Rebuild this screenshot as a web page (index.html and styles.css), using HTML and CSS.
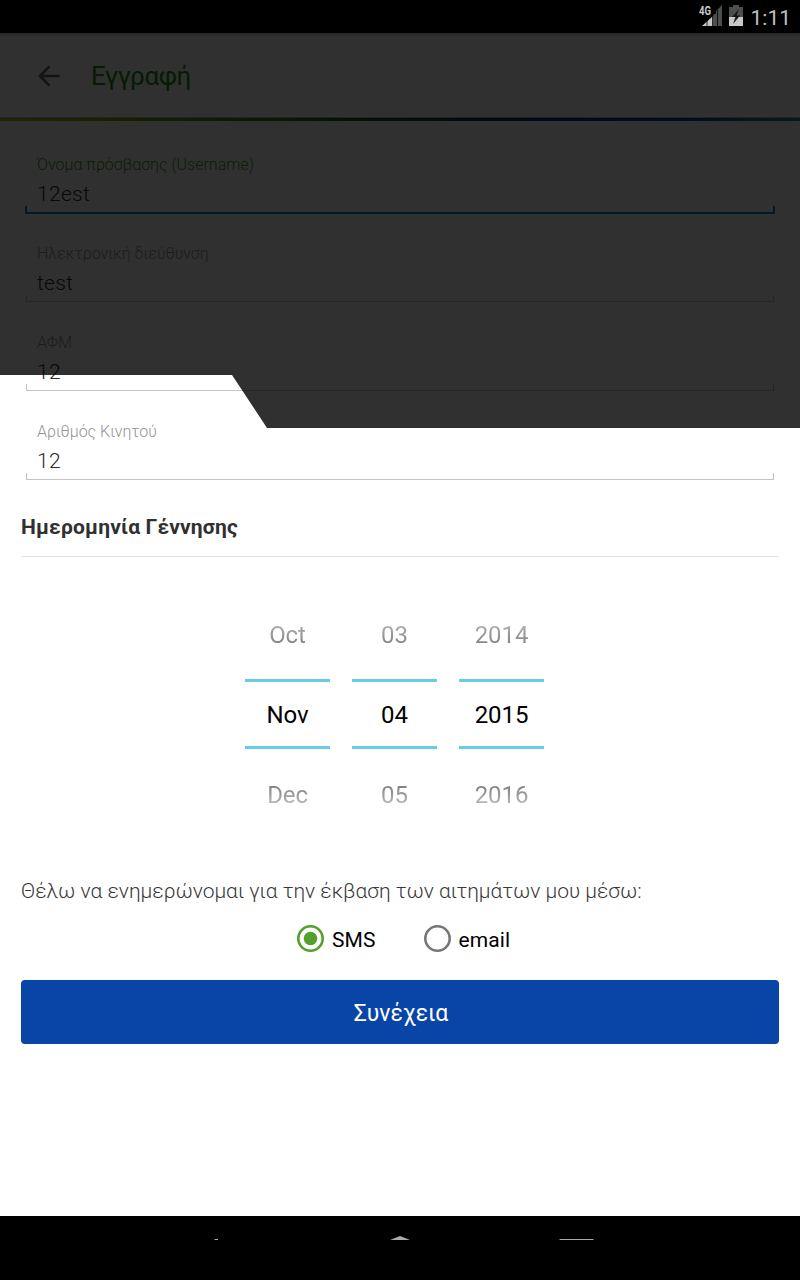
FILE: index.html
```html
<!DOCTYPE html>
<html lang="el">
<head>
<meta charset="utf-8">
<title>Εγγραφή</title>
<link rel="stylesheet" href="styles.css">
</head>
<body>
<div class="screen">
  <header class="status">
    <svg class="signal" width="24" height="22" viewBox="0 0 24 22"><path d="M23 0V21H4L11 14H14V11L15 9H17V6Z" fill="#4b4f4b"/><path d="M3 21L14 11V21Z" fill="#c8c8c8"/><path d="M8 15V21M13.500 10V21M18.500 5V21" stroke="#000" stroke-width=".8"/><text x="0" y="9.500" class="net" textLength="12" lengthAdjust="spacingAndGlyphs">4G</text></svg>
    <svg class="battery" width="14" height="21" viewBox="0 0 14 21"><path d="M4 0h6v2h4v19H0V2h4z" fill="#4b4f4b"/><path d="M0 12h14v9H0z" fill="#c8c8c8"/><path d="M10 4L3 12h3.500L4 19L11 10.500H7.500z" fill="#151515"/></svg>
    <span class="clock">1:11</span>
  </header>
  <div class="appbar">
    <svg class="back" width="22" height="22" viewBox="0 0 22 22"><path d="M21.500 11H2M11.500 1.300L1.800 11L11.500 20.700" fill="none" stroke="#5f6664" stroke-width="2.600"/></svg>
    <h1 class="title">Εγγραφή</h1>
  </div>
  <div class="rainbow"></div>
  <main class="form">
    <div class="field active"><label class="label">Όνομα πρόσβασης (Username)</label><div class="value">12est</div></div>
    <div class="field"><label class="label">Ηλεκτρονική διεύθυνση</label><div class="value">test</div></div>
    <div class="field"><label class="label">ΑΦΜ</label><div class="value">12</div></div>
    <div class="field"><label class="label">Αριθμός Κινητού</label><div class="value">12</div></div>
    <h2 class="section">Ημερομηνία Γέννησης</h2>
    <div class="picker">
      <div class="wheel"><div class="prev">Oct</div><div class="current">Nov</div><div class="next">Dec</div></div>
      <div class="wheel"><div class="prev">03</div><div class="current">04</div><div class="next">05</div></div>
      <div class="wheel"><div class="prev">2014</div><div class="current">2015</div><div class="next">2016</div></div>
    </div>
    <p class="question">Θέλω να ενημερώνομαι για την έκβαση των αιτημάτων μου μέσω:</p>
    <div class="radios">
      <div class="option"><svg width="27" height="27" viewBox="0 0 27 27"><circle cx="13.500" cy="13.500" r="12.200" fill="none" stroke="#53a12b" stroke-width="2.600"/><circle cx="13.500" cy="13.500" r="6.800" fill="#53a12b"/></svg><span class="name">SMS</span></div>
      <div class="option"><svg width="27" height="27" viewBox="0 0 27 27"><circle cx="13.500" cy="13.500" r="12.200" fill="none" stroke="#777" stroke-width="2.600"/></svg><span class="name">email</span></div>
    </div>
    <button class="submit">Συνέχεια</button>
  </main>
  <footer class="nav">
    <svg width="800" height="24" viewBox="0 0 800 24"><path d="M214 24L215 23H218V24Z" fill="#aaa"/><path d="M390 24L400 20L410 24Z" fill="#aaa"/><path d="M559.500 23.500H593.500" stroke="#aaa"/></svg>
  </footer>
  <div class="scrim"></div>
</div>
</body>
</html>
```
FILE: styles.css
```css
* { box-sizing: border-box; }
body { margin: 0; font-family: Roboto, "Noto Sans", sans-serif; background: #fff; }
.screen { position: relative; width: 800px; height: 1280px; overflow: hidden; display: flex; flex-direction: column; }
.status { flex: none; height: 33px; background: #000; display: flex; align-items: flex-start; justify-content: flex-end; padding: 5px 9px 0 0; }
.signal { margin-right: 6px; }
.net { font: 700 12px "Roboto", sans-serif; fill: #c8c8c8; }
.battery { margin-right: 8px; }
.clock { color: #c0c0c0; font-size: 21px; line-height: 26px; }
.appbar { flex: none; height: 84px; display: flex; align-items: center; padding: 2px 0 0 38px; box-shadow: inset 0 4px 3px -2px #ccc; }
.title { margin: 0 0 0 31px; font-size: 26px; font-weight: 400; line-height: 32px; letter-spacing: -.4px; color: #229018; }
.rainbow { flex: none; height: 4px; border-top: 1px solid #b8c4b8; background: linear-gradient(90deg, #a8c000, #60a000 22%, #107010 40%, #083060 62%, #003098 73%, #005090 87%, #0090b0); }
.form { flex: 1; padding: 25px 21px 0; }
.field { position: relative; height: 89px; margin: 0 5px; padding: 8px 11px 0; }
.field::after { content: ""; position: absolute; left: 0; right: 0; top: 60px; height: 6px; border: 1px solid #c4c4c4; border-top: 0; }
.active::after { left: -1px; right: -1px; top: 61px; border: 2px solid #0088c8; border-top: 0; }
.label { display: block; font-size: 16px; line-height: 22px; font-weight: 300; color: #949494; }
.active .label { color: #3c9c2c; }
.value { font-size: 21px; line-height: 30px; font-weight: 300; color: #2a2a2a; margin-top: 3px; letter-spacing: .3px; }
.active::after { margin-top: -1px; }
.section { margin: 0; height: 55px; padding-top: 11px; border-bottom: 1px solid #e3e3e3; font-size: 21px; line-height: 28px; font-weight: 700; letter-spacing: .16px; color: #303030; }
.picker { display: flex; gap: 22px; padding-left: 224px; height: 319px; padding-top: 38px; }
.wheel { width: 85px; text-align: center; font-size: 24px; line-height: 30px; letter-spacing: -.1px; }
.prev, .next { color: transparent; background-clip: text; -webkit-background-clip: text; }
.prev { height: 84px; padding-top: 25px; background-image: linear-gradient(#fff 10px, #aaa 32px, #808080 50px); }
.current { height: 70px; padding-top: 18px; border-top: 3px solid #69caec; border-bottom: 3px solid #69caec; color: #000; }
.next { height: 70px; padding-top: 31px; background-image: linear-gradient(#808080 37px, #bbb 56px, #fff 75px); }
.question { margin: 0; font-size: 21px; line-height: 30px; font-weight: 300; letter-spacing: -.01px; color: #383838; white-space: nowrap; }
.radios { height: 74px; display: flex; gap: 48px; padding: 15px 0 0 276px; }
.option { display: flex; gap: 8px; height: 34px; align-items: center; font-size: 21px; letter-spacing: .1px; color: #000; }
.name { padding-top: 3px; }
.submit { width: 100%; height: 64px; display: block; border: 0; border-radius: 4px; padding: 2px 0 0 2px; background: #0845a7; color: #fff; font: 400 23px Roboto, "Noto Sans", sans-serif; }
.nav { flex: none; height: 64px; background: #000; }
.nav svg { display: block; }
.scrim { position: absolute; inset: 33px 0 auto; height: 395px; background: rgba(0,0,0,.812); clip-path: polygon(0 0, 100% 0, 100% 100%, 267px 100%, 232px 342px, 0 342px); }
```
